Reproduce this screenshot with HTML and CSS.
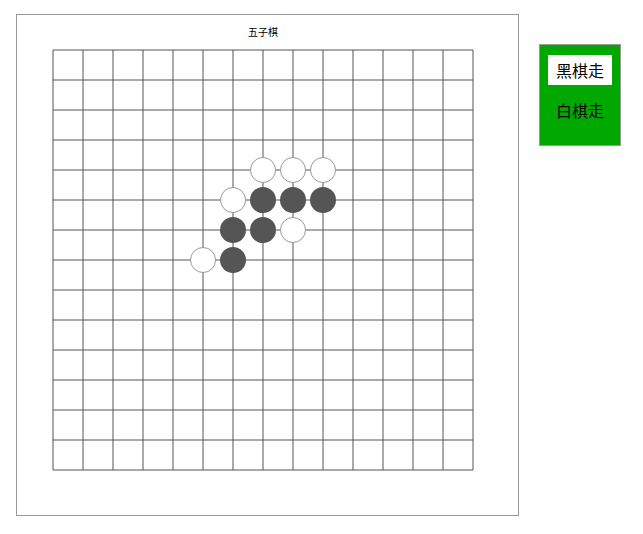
FILE: index.html
```html
<!DOCTYPE html>
<html lang="zh">
<head>
<meta charset="utf-8">
<title>五子棋</title>
<link rel="stylesheet" href="styles.css">
</head>
<body>
<div class="page">
  <div class="board-box">
    <div class="title">五子棋</div>
    <svg class="board" width="422" height="422" viewBox="0 0 422 422" xmlns="http://www.w3.org/2000/svg">
      <g stroke="#555" stroke-width="1">
        <line x1="1" y1="1" x2="421" y2="1"/>
        <line x1="1" y1="31" x2="421" y2="31"/>
        <line x1="1" y1="61" x2="421" y2="61"/>
        <line x1="1" y1="91" x2="421" y2="91"/>
        <line x1="1" y1="121" x2="421" y2="121"/>
        <line x1="1" y1="151" x2="421" y2="151"/>
        <line x1="1" y1="181" x2="421" y2="181"/>
        <line x1="1" y1="211" x2="421" y2="211"/>
        <line x1="1" y1="241" x2="421" y2="241"/>
        <line x1="1" y1="271" x2="421" y2="271"/>
        <line x1="1" y1="301" x2="421" y2="301"/>
        <line x1="1" y1="331" x2="421" y2="331"/>
        <line x1="1" y1="361" x2="421" y2="361"/>
        <line x1="1" y1="391" x2="421" y2="391"/>
        <line x1="1" y1="421" x2="421" y2="421"/>
        <line x1="1" y1="1" x2="1" y2="421"/>
        <line x1="31" y1="1" x2="31" y2="421"/>
        <line x1="61" y1="1" x2="61" y2="421"/>
        <line x1="91" y1="1" x2="91" y2="421"/>
        <line x1="121" y1="1" x2="121" y2="421"/>
        <line x1="151" y1="1" x2="151" y2="421"/>
        <line x1="181" y1="1" x2="181" y2="421"/>
        <line x1="211" y1="1" x2="211" y2="421"/>
        <line x1="241" y1="1" x2="241" y2="421"/>
        <line x1="271" y1="1" x2="271" y2="421"/>
        <line x1="301" y1="1" x2="301" y2="421"/>
        <line x1="331" y1="1" x2="331" y2="421"/>
        <line x1="361" y1="1" x2="361" y2="421"/>
        <line x1="391" y1="1" x2="391" y2="421"/>
        <line x1="421" y1="1" x2="421" y2="421"/>
      </g>
      <g class="white-stones" fill="#fff" stroke="#999" stroke-width="1">
        <circle cx="211" cy="121" r="12.5"/>
        <circle cx="241" cy="121" r="12.5"/>
        <circle cx="271" cy="121" r="12.5"/>
        <circle cx="181" cy="151" r="12.5"/>
        <circle cx="241" cy="181" r="12.5"/>
        <circle cx="151" cy="211" r="12.5"/>
      </g>
      <g class="black-stones" fill="#555">
        <circle cx="211" cy="151" r="13"/>
        <circle cx="241" cy="151" r="13"/>
        <circle cx="271" cy="151" r="13"/>
        <circle cx="181" cy="181" r="13"/>
        <circle cx="211" cy="181" r="13"/>
        <circle cx="181" cy="211" r="13"/>
      </g>
    </svg>
  </div>
  <div class="turn-panel">
    <div class="turn active">黑棋走</div>
    <div class="turn">白棋走</div>
  </div>
</div>
</body>
</html>
```
FILE: styles.css
```css
html, body {
  margin: 0;
  padding: 0;
  background: #fff;
}
body {
  font-family: "Noto Sans CJK SC", "Noto Sans", sans-serif;
  color: #000;
}
.page {
  display: flex;
  align-items: flex-start;
  gap: 20px;
  padding: 14px 0 0 16px;
}
.board-box {
  box-sizing: border-box;
  width: 503px;
  height: 502px;
  border: 1px solid #999;
  padding: 10px 0 0 35px;
  display: flex;
  flex-direction: column;
}
.title {
  width: 422px;
  text-align: center;
  font-size: 10px;
  line-height: 14px;
  margin-bottom: 10px;
}
.board {
  display: block;
}
.turn-panel {
  box-sizing: border-box;
  margin-top: 30px;
  width: 82px;
  height: 102px;
  border: 1px solid #999;
  background: #00a800;
  padding: 10px 8px;
  display: flex;
  flex-direction: column;
  gap: 10px;
}
.turn {
  width: 64px;
  height: 30px;
  font-size: 16px;
  line-height: 30px;
  text-align: center;
}
.turn.active {
  background: #fff;
}
```
